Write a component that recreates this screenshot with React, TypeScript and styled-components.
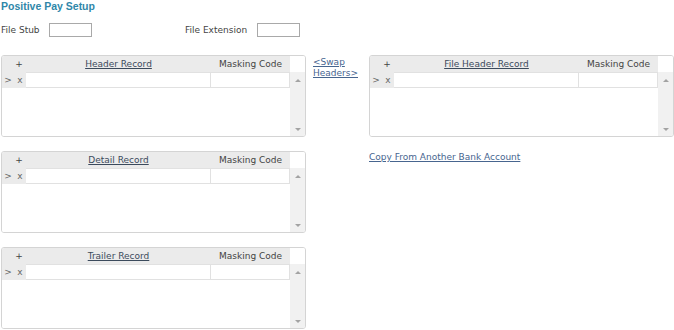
import styled, { createGlobalStyle } from 'styled-components'

const GlobalStyle = createGlobalStyle`
	body {
		margin: 0;
		background: #fff;
		font-family: 'DejaVu Sans', Verdana, sans-serif;
		font-size: 9px;
		color: #333;
	}
`

const Page = styled.div`
	padding: 0 1px;
	width: 673px;
`

const Title = styled.h1`
	margin: 0;
	font-family: 'Liberation Sans', Arial, sans-serif;
	font-size: 10.5px;
	font-weight: bold;
	color: #2f87a9;
	line-height: 12px;
`

const FormRow = styled.div`
	display: flex;
	align-items: center;
	margin-top: 11px;
	height: 14px;
`

const Field = styled.label<{ $width: number }>`
	display: flex;
	align-items: center;
	width: ${(p) => p.$width}px;
	font-size: 9px;
	color: #444;
`

const FieldLabel = styled.span<{ $width: number }>`
	width: ${(p) => p.$width}px;
`

const TextBox = styled.input`
	box-sizing: border-box;
	width: 43px;
	height: 14px;
	margin: 0;
	padding: 0;
	border: 1px solid #a9a9a9;
	background: #fff;
`

const Layout = styled.div`
	display: grid;
	grid-template-columns: 305px 63px 305px;
	margin-top: 18px;
	align-items: start;
`

const Column = styled.div`
	display: flex;
	flex-direction: column;
	gap: 14px;
`

const GridBox = styled.div`
	box-sizing: border-box;
	width: 305px;
	height: 82px;
	border: 1px solid #d4d4d4;
	border-radius: 3px;
	display: grid;
	grid-template-columns: 288px 1fr;
	grid-template-rows: 16px 1fr;
	overflow: hidden;
`

const HeaderRow = styled.div`
	display: grid;
	grid-template-columns: 24px 185px 79px;
	background: #ebebeb;
	align-items: center;
	color: #444;
`

const HeaderCell = styled.div<{ $link?: boolean; $shift?: number }>`
	text-align: center;
	padding-left: ${(p) => p.$shift ?? 0}px;
	text-decoration: ${(p) => (p.$link ? 'underline' : 'none')};
	color: ${(p) => (p.$link ? '#3b4a5c' : '#444')};
	white-space: nowrap;
`

const Corner = styled.div`
	background: #fff;
`

const Body = styled.div`
	background: #fff;
`

const DataRow = styled.div`
	display: grid;
	grid-template-columns: 12px 12px 185px 79px;
	height: 16px;
`

const Handle = styled.div`
	background: #ebebeb;
	color: #666;
	font-size: 9px;
	display: flex;
	align-items: center;
	justify-content: center;
	line-height: 1;
`

const Cell = styled.div`
	box-sizing: border-box;
	border: 1px solid #e1e1e1;
	border-left-width: 0;
	background: #fff;

	&:first-of-type {
		border-left-width: 1px;
	}
`

const Scroll = styled.div`
	background: #f1f1f1;
	display: flex;
	flex-direction: column;
	justify-content: space-between;
	align-items: center;
	padding: 7px 0 5px;
`

const Arrow = styled.div<{ $down?: boolean }>`
	width: 0;
	height: 0;
	border-left: 3px solid transparent;
	border-right: 3px solid transparent;
	${(p) =>
		p.$down
			? 'border-top: 3px solid #a3a3a3;'
			: 'border-bottom: 3px solid #a3a3a3;'}
`

const Middle = styled.div`
	padding: 2px 0 0 7px;
`

const Link = styled.a`
	color: #47658f;
	text-decoration: underline;
	font-size: 9px;
	line-height: 11px;
	cursor: pointer;
`

const SwapLink = styled(Link)`
	display: block;
	width: 44px;
`

const CopyLink = styled(Link)`
	display: block;
	margin-top: 1px;
`

const RecordGrid = ({ title }: { title: string }): JSX.Element => (
	<GridBox>
		<HeaderRow>
			<HeaderCell $shift={10}>+</HeaderCell>
			<HeaderCell $link>{title}</HeaderCell>
			<HeaderCell>Masking Code</HeaderCell>
		</HeaderRow>
		<Corner />
		<Body>
			<DataRow>
				<Handle>&gt;</Handle>
				<Handle>x</Handle>
				<Cell />
				<Cell />
			</DataRow>
		</Body>
		<Scroll>
			<Arrow />
			<Arrow $down />
		</Scroll>
	</GridBox>
)

const App = (): JSX.Element => {
	return (
		<Page>
			<GlobalStyle />
			<Title>Positive Pay Setup</Title>
			<FormRow>
				<Field $width={184}>
					<FieldLabel $width={48}>File Stub</FieldLabel>
					<TextBox />
				</Field>
				<Field $width={200}>
					<FieldLabel $width={72}>File Extension</FieldLabel>
					<TextBox />
				</Field>
			</FormRow>
			<Layout>
				<Column>
					<RecordGrid title="Header Record" />
					<RecordGrid title="Detail Record" />
					<RecordGrid title="Trailer Record" />
				</Column>
				<Middle>
					<SwapLink>&lt;Swap Headers&gt;</SwapLink>
				</Middle>
				<Column>
					<RecordGrid title="File Header Record" />
					<CopyLink>Copy From Another Bank Account</CopyLink>
				</Column>
			</Layout>
		</Page>
	)
}

export default App
